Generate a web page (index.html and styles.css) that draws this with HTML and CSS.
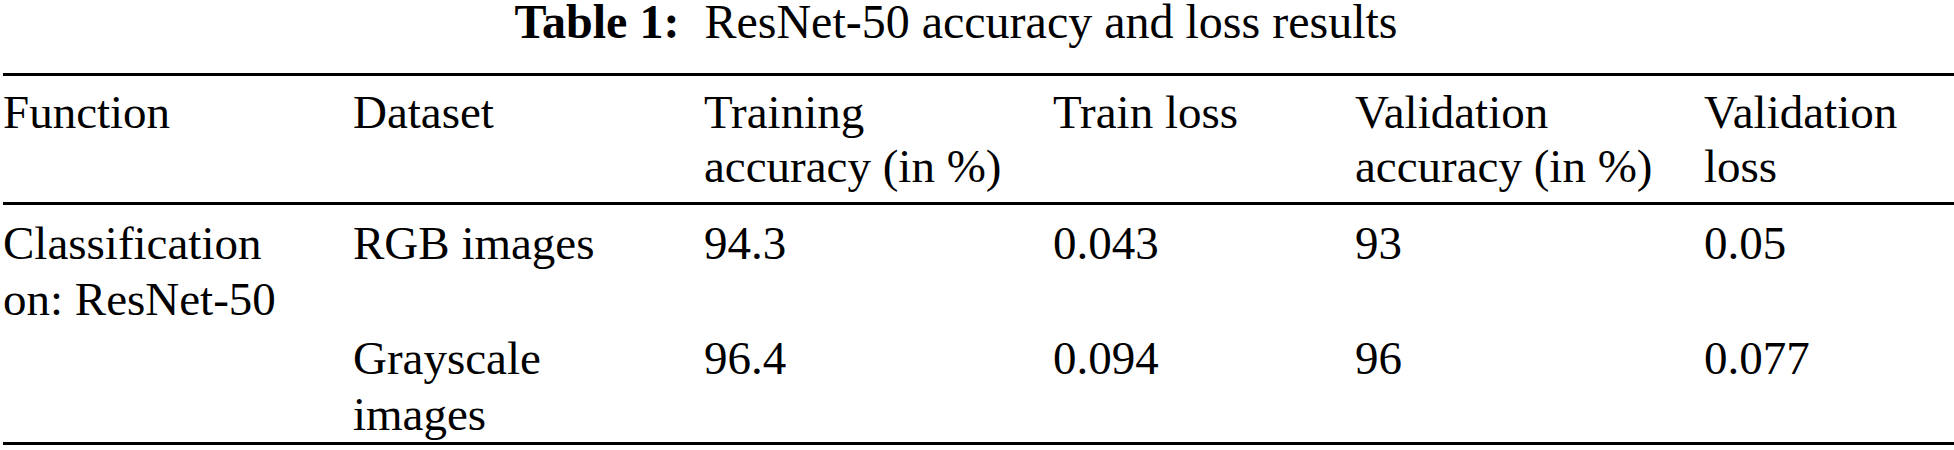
FILE: index.html
```html
<!DOCTYPE html>
<html lang="en">
<head>
    <meta charset="UTF-8">
    <meta name="viewport" content="width=device-width, initial-scale=1.0">
    <title>Table 1: ResNet-50 accuracy and loss results</title>
    <link rel="stylesheet" href="styles.css">
</head>
<body>
    <p class="caption"><strong>Table 1:</strong> ResNet-50 accuracy and loss results</p>

    <table class="results">
        <colgroup>
            <col class="col-function">
            <col class="col-dataset">
            <col class="col-train-acc">
            <col class="col-train-loss">
            <col class="col-val-acc">
            <col class="col-val-loss">
        </colgroup>
        <thead>
            <tr>
                <th>Function</th>
                <th>Dataset</th>
                <th>Training<br>accuracy (in %)</th>
                <th>Train loss</th>
                <th>Validation<br>accuracy (in %)</th>
                <th>Validation<br>loss</th>
            </tr>
        </thead>
        <tbody>
            <tr class="first">
                <td>Classification<br>on: ResNet-50</td>
                <td>RGB images</td>
                <td>94.3</td>
                <td>0.043</td>
                <td>93</td>
                <td>0.05</td>
            </tr>
            <tr>
                <td></td>
                <td>Grayscale<br>images</td>
                <td>96.4</td>
                <td>0.094</td>
                <td>96</td>
                <td>0.077</td>
            </tr>
        </tbody>
    </table>
</body>
</html>
```

FILE: styles.css
```css
body {
    background-color: #ffffff;
    color: #000000;
    font-family: 'Liberation Serif', 'Times New Roman', serif;
    font-size: 47px;
    margin: 0;
    padding: 0;
}

.caption {
    margin: 0 0 29px 0;
    padding-right: 42px;
    font-size: 48px;
    line-height: 44px;
    text-align: center;
}

.caption strong {
    margin-right: 13px;
}

.results {
    margin-left: 3px;
    width: 1951px;
    table-layout: fixed;
    border-collapse: separate;
    border-spacing: 0;
    border-top: 3px solid #000000;
    border-bottom: 3px solid #000000;
}

.col-function { width: 350px; }
.col-dataset { width: 351px; }
.col-train-acc { width: 349px; }
.col-train-loss { width: 302px; }
.col-val-acc { width: 349px; }
.col-val-loss { width: 250px; }

.results th {
    font-weight: normal;
    text-align: left;
    vertical-align: top;
    line-height: 54px;
    padding: 9px 0;
    border-bottom: 3px solid #000000;
}

.results td {
    text-align: left;
    vertical-align: top;
    line-height: 56px;
    padding: 3px 0 0 0;
}

.results tr.first td {
    padding-top: 10px;
}
```
